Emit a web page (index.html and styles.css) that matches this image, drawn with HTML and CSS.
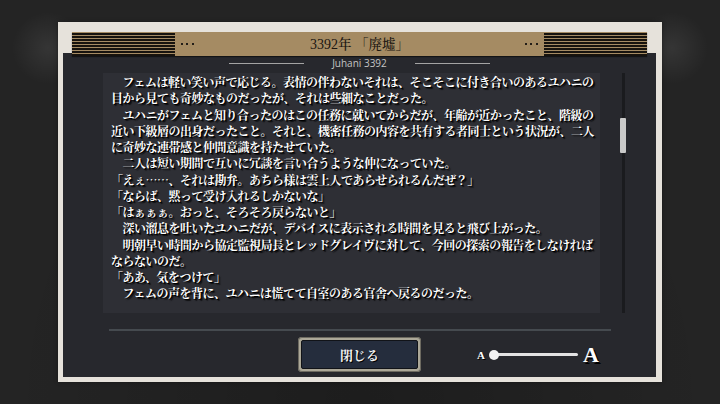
FILE: index.html
```html
<!DOCTYPE html>
<html lang="ja">
<head>
<meta charset="utf-8">
<title>3392年 「廃墟」</title>
<link rel="stylesheet" href="styles.css">
</head>
<body>
<div class="stage">
  <div class="frame">
    <div class="header">
      <div class="stripes"></div>
      <span class="dots"></span>
      <h1 class="title"><span class="num">3392</span>年 「廃墟」</h1>
      <span class="dots"></span>
      <div class="stripes"></div>
    </div>
    <div class="panel">
      <div class="subtitle"><span class="rule"></span><span class="sub">Juhani 3392</span><span class="rule"></span></div>
      <div class="body">
        <div class="textbox">
          <p class="line">　フェムは軽い笑い声で応じる。表情の伴わないそれは、そこそこに付き合いのあるユハニの</p>
          <p class="line">目から見ても奇妙なものだったが、それは些細なことだった。</p>
          <p class="line">　ユハニがフェムと知り合ったのはこの任務に就いてからだが、年齢が近かったこと、階級の</p>
          <p class="line">近い下級層の出身だったこと。それと、機密任務の内容を共有する者同士という状況が、二人</p>
          <p class="line">に奇妙な連帯感と仲間意識を持たせていた。</p>
          <p class="line">　二人は短い期間で互いに冗談を言い合うような仲になっていた。</p>
          <p class="line">「えぇ……、それは勘弁。あちら様は雲上人であらせられるんだぜ？」</p>
          <p class="line">「ならば、黙って受け入れるしかないな」</p>
          <p class="line">「はぁぁぁ。おっと、そろそろ戻らないと」</p>
          <p class="line">　深い溜息を吐いたユハニだが、デバイスに表示される時間を見ると飛び上がった。</p>
          <p class="line">　明朝早い時間から協定監視局長とレッドグレイヴに対して、今回の探索の報告をしなければ</p>
          <p class="line">ならないのだ。</p>
          <p class="line">「ああ、気をつけて」</p>
          <p class="line">　フェムの声を背に、ユハニは慌てて自室のある官舎へ戻るのだった。</p>
        </div>
        <div class="scroll"><div class="thumb"></div></div>
      </div>
      <div class="sep"></div>
      <div class="footer">
        <button class="close" type="button"><span class="close-inner">閉じる</span></button>
        <div class="slider">
          <span class="a-small">A</span>
          <span class="track"><span class="knob"></span></span>
          <span class="a-big">A</span>
        </div>
      </div>
    </div>
  </div>
</div>
</body>
</html>
```
FILE: styles.css
```css
html, body {
  margin: 0;
  padding: 0;
}
body {
  width: 720px;
  height: 404px;
  overflow: hidden;
  background-color: #242424;
  background-image:
    radial-gradient(circle at 48px 48px, rgba(255,255,255,0.08), rgba(255,255,255,0) 36px),
    radial-gradient(circle at 672px 48px, rgba(255,255,255,0.08), rgba(255,255,255,0) 36px),
    radial-gradient(ellipse at 50% 100%, rgba(0,0,0,0.2), rgba(0,0,0,0) 70%);
  font-family: "Noto Sans CJK JP", sans-serif;
}
.stage {
  padding-top: 22px;
  display: flex;
  justify-content: center;
}
.frame {
  width: 593px;
  height: 355px;
  padding: 0 6px 5px 5px;
  background: #e6e2db;
  display: flex;
  flex-direction: column;
  box-shadow: 0 0 4px rgba(0,0,0,0.35);
}
.header {
  position: relative;
  z-index: 1;
  margin: 10px 9px 0 9px;
  height: 24px;
  background: #a58b63;
  display: flex;
  align-items: center;
  box-shadow: 0 1px 1px rgba(0,0,0,0.5);
}
.stripes {
  width: 103px;
  height: 24px;
  flex: none;
  background: repeating-linear-gradient(to bottom, #a58b63 0 1px, #17130e 1px 3px);
}
.dots {
  width: 13px;
  height: 2px;
  margin: 0 6px;
  flex: none;
  background: repeating-linear-gradient(to right, #221d17 0 2px, transparent 2px 5.5px);
}
.title {
  flex: 1;
  margin: 0;
  text-align: center;
  font-family: "Noto Serif CJK JP", "Liberation Serif", "Noto Sans CJK JP", serif;
  font-weight: 500;
  font-size: 13.5px;
  line-height: 24px;
  color: #1a1611;
}
.title .num {
  font-family: "Liberation Serif", serif;
  font-size: 14px;
}
.panel {
  flex: 1;
  margin-top: -3px;
  background: #27282d;
  display: flex;
  flex-direction: column;
}
.subtitle {
  margin-top: 3px;
  height: 14px;
  display: flex;
  align-items: center;
  justify-content: center;
  gap: 28px;
}
.rule {
  width: 75px;
  height: 1px;
  background: #a4a4a4;
}
.sub {
  font-family: "Open Sans", "Liberation Sans", sans-serif;
  font-size: 10px;
  line-height: 14px;
  color: #c4c4c4;
}
.body {
  margin: 3px 0 0 40px;
  display: flex;
  height: 240px;
}
.textbox {
  width: 489px;
  height: 239px;
  padding: 1px 0 0 8px;
  background: #2e2f35;
}
.line {
  margin: 0;
  white-space: nowrap;
  font-family: "Noto Serif CJK JP", "Noto Sans CJK JP", serif;
  font-weight: 700;
  font-size: 12px;
  letter-spacing: -0.5px;
  line-height: 16.25px;
  color: #ffffff;
  text-shadow: 1px 1px 0 #000, 2px 2px 1px rgba(0,0,0,0.7);
}
.scroll {
  position: relative;
  margin-left: 20px;
  width: 6px;
  display: flex;
  justify-content: center;
}
.scroll::before {
  content: "";
  width: 3px;
  background: #1a1b1e;
}
.thumb {
  position: absolute;
  left: 0;
  top: 45px;
  width: 6px;
  height: 35px;
  background: #c9c9c9;
  border-radius: 1px;
}
.sep {
  margin: 16px 0 0 46px;
  width: 502px;
  height: 2px;
  background: #454a4f;
}
.footer {
  margin-top: 6px;
  padding-left: 235px;
  height: 35px;
  display: flex;
  align-items: center;
}
.close {
  width: 123px;
  height: 35px;
  padding: 3px;
  border: none;
  border-radius: 4px;
  background: #aca898;
  box-shadow: inset 0 0 0 1px #6d6a60;
  display: flex;
}
.close-inner {
  flex: 1;
  border: 1px solid #111318;
  border-radius: 2px;
  background: #252d3d;
  color: #f2f2f2;
  font-family: "Noto Serif CJK JP", "Noto Sans CJK JP", serif;
  font-weight: 700;
  font-size: 13px;
  line-height: 27px;
  text-align: center;
  text-shadow: 1px 1px 0 #000;
}
.slider {
  margin-left: 56px;
  display: flex;
  align-items: center;
}
.a-small {
  width: 8px;
  font-family: "Liberation Serif", serif;
  font-weight: 700;
  font-size: 11px;
  line-height: 12px;
  color: #fff;
  text-shadow: 1px 1px 0 #000;
}
.track {
  position: relative;
  margin-left: 4px;
  width: 89px;
  height: 10px;
  display: flex;
  align-items: center;
}
.track::before {
  content: "";
  margin-left: 5px;
  flex: 1;
  height: 3px;
  border-radius: 2px;
  background: #e3e3e3;
}
.knob {
  position: absolute;
  left: 0;
  top: 0;
  width: 10px;
  height: 10px;
  border-radius: 50%;
  background: #f3f3f3;
}
.a-big {
  margin-left: 5px;
  font-family: "Liberation Serif", serif;
  font-weight: 700;
  font-size: 22px;
  line-height: 22px;
  color: #fff;
  text-shadow: 2px 2px 0 #000;
}
```
